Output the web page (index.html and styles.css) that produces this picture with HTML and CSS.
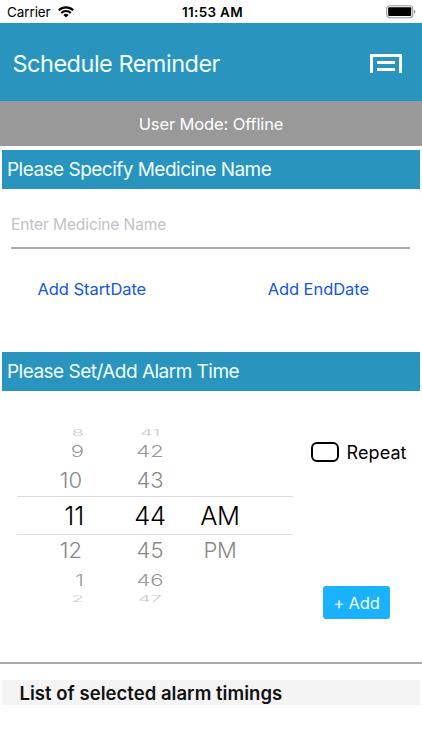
FILE: index.html
```
<!DOCTYPE html>
<html lang="en">
<head>
    <meta charset="UTF-8">
    <meta name="viewport" content="width=device-width, initial-scale=1.0">
    <title>Schedule Reminder</title>
    <link rel="stylesheet" href="styles.css">
</head>
<body>
    <div class="status-bar">
        <div class="carrier">
            <span>Carrier</span>
            <svg class="wifi" width="16" height="12" viewBox="0 0 16 12">
                <path d="M0.8 4.3a10.3 10.3 0 0 1 14.4 0" fill="none" stroke="#000" stroke-width="2.1"/>
                <path d="M3.2 7a6.9 6.9 0 0 1 9.6 0" fill="none" stroke="#000" stroke-width="2"/>
                <path d="M8 11.6L5.4 9a3.7 3.7 0 0 1 5.2 0z"/>
            </svg>
        </div>
        <span class="clock">11:53 AM</span>
        <svg class="battery" width="30" height="14" viewBox="0 0 30 14">
            <rect x="0.7" y="0.7" width="26" height="12" rx="3" fill="#fff" stroke="#999" stroke-width="1.1"/>
            <rect x="2.2" y="2.3" width="23" height="8.8" rx="1"/>
            <path d="M28.1 4.7a2.3 2.3 0 0 1 0 4z" fill="#777"/>
        </svg>
    </div>

    <header class="header">
        <h1>Schedule Reminder</h1>
        <svg class="menu-icon" width="32" height="19" viewBox="0 0 32 19">
            <path d="M1.5 19V1.5h29V19" fill="none" stroke="#fff" stroke-width="3"/>
            <path d="M7 8.4h18M7 15.4h18" stroke="#fff" stroke-width="3"/>
        </svg>
    </header>
    <div class="user-mode">User Mode: Offline</div>

    <h2 class="section-title">Please Specify Medicine Name</h2>
    <input class="medicine-input" type="text" placeholder="Enter Medicine Name">
    <div class="dates">
        <a class="start-date">Add StartDate</a>
        <a class="end-date">Add EndDate</a>
    </div>

    <h2 class="section-title">Please Set/Add Alarm Time</h2>
    <div class="alarm">
        <div class="picker">
            <div class="row far"><span class="hour">8</span><span class="minute">41</span><span class="period"></span></div>
            <div class="row mid"><span class="hour">9</span><span class="minute">42</span><span class="period"></span></div>
            <div class="row near"><span class="hour">10</span><span class="minute">43</span><span class="period"></span></div>
            <div class="row selected"><span class="hour">11</span><span class="minute">44</span><span class="period">AM</span></div>
            <div class="row near"><span class="hour">12</span><span class="minute">45</span><span class="period">PM</span></div>
            <div class="row mid"><span class="hour">1</span><span class="minute">46</span><span class="period"></span></div>
            <div class="row far"><span class="hour">2</span><span class="minute">47</span><span class="period"></span></div>
        </div>
        <div class="alarm-side">
            <div class="repeat">
                <span class="checkbox"></span>
                <span class="repeat-label">Repeat</span>
            </div>
            <button class="add-button">+ Add</button>
        </div>
    </div>

    <div class="list-title">List of selected alarm timings</div>
</body>
</html>
```
FILE: styles.css
```
* {
    box-sizing: border-box;
}

body {
    margin: 0;
    height: 750px;
    overflow: hidden;
    background: #fff;
    font-family: Inter, "Liberation Sans", sans-serif;
    color: #000;
}

h1, h2 {
    margin: 0;
    font-weight: 400;
}

.status-bar {
    display: grid;
    grid-template-columns: 1fr auto 1fr;
    align-items: center;
    height: 23px;
    padding: 1px 6px 0 7px;
    font-size: 13.5px;
}

.carrier {
    display: flex;
    align-items: center;
    gap: 7px;
}

.carrier span {
    letter-spacing: -0.1px;
}

.clock {
    padding-left: 2px;
    font-weight: 600;
    letter-spacing: 0.3px;
}

.battery {
    justify-self: end;
}

.header {
    display: flex;
    align-items: center;
    justify-content: space-between;
    height: 78px;
    padding: 3px 20px 0 12.5px;
    background: #2994bd;
    color: #f0ffff;
}

.header h1 {
    font-size: 23.5px;
    letter-spacing: -0.5px;
}

.user-mode {
    display: flex;
    align-items: center;
    justify-content: center;
    height: 45px;
    padding-top: 1px;
    background: #999;
    color: #fff;
    font-size: 16.5px;
    letter-spacing: -0.13px;
}

.section-title {
    display: flex;
    align-items: center;
    height: 39px;
    margin: 4px 2px 0 2px;
    padding-left: 5px;
    background: #2994bd;
    color: #f0ffff;
    font-size: 19px;
    letter-spacing: -0.52px;
}

.medicine-input {
    display: block;
    width: 399px;
    height: 36px;
    margin: 24px 0 0 11px;
    padding: 0 0 11px;
    border: 0;
    border-bottom: 2px solid #aaa;
    outline: none;
    background: none;
    font-family: inherit;
    font-size: 15.5px;
    letter-spacing: -0.1px;
}

.medicine-input::placeholder {
    color: #c2c2c7;
}

.dates {
    display: flex;
    justify-content: space-between;
    height: 99px;
    padding: 29px 53px 0 37.5px;
    color: #1557e0;
    font-size: 16.5px;
    letter-spacing: -0.06px;
    line-height: 22px;
}

.alarm {
    display: flex;
    height: 273px;
    border-bottom: 2px solid #aaa;
}

.picker {
    width: 276px;
    margin: 37px 0 0 17px;
}

.row {
    display: grid;
    grid-template-columns: 67px 132px 8px;
    grid-template-rows: 100%;
    align-items: center;
    line-height: 1;
    font-size: 22px;
    font-weight: 300;
}

.hour {
    text-align: right;
}

.minute {
    text-align: center;
}

.period {
    display: flex;
    justify-content: center;
}

.selected {
    height: 39px;
    border-top: 1px solid #ddd;
    border-bottom: 1px solid #ddd;
    font-size: 25.5px;
    letter-spacing: -0.2px;
}

.near {
    height: 31px;
    padding-bottom: 1px;
    color: #888;
}

.near .hour {
    padding-right: 2px;
}

.near .period {
    letter-spacing: -0.4px;
}

.mid {
    height: 28px;
    color: #999;
}

.far {
    height: 9px;
    color: #ccc;
    font-size: 20px;
}

/* rows flatten as the wheel turns away */
.mid span {
    transform: scaleY(0.73);
}

.far span {
    transform: scaleY(0.42);
}

.alarm-side {
    display: flex;
    flex-direction: column;
    flex: 1;
    padding-top: 49px;
}

.repeat {
    display: flex;
    align-items: center;
    height: 24px;
    padding-left: 17.5px;
    font-size: 18px;
}

.checkbox {
    width: 28px;
    height: 20px;
    margin-right: 8px;
    border: 2px solid #000;
    border-radius: 6px;
}

.repeat-label {
    letter-spacing: 0.1px;
}

.add-button {
    width: 67px;
    height: 33px;
    margin: 122px 0 0 30px;
    padding: 0;
    border: 0;
    border-radius: 3px;
    background: #1ab2ff;
    color: #f0ffff;
    font-family: inherit;
    font-size: 16.5px;
    letter-spacing: -0.2px;
}

.list-title {
    height: 25px;
    margin: 16px 2px 0;
    padding-left: 17.5px;
    background: #f4f4f4;
    color: #111;
    font-size: 18.5px;
    font-weight: 600;
    letter-spacing: 0.03px;
    line-height: 27px;
}
```
